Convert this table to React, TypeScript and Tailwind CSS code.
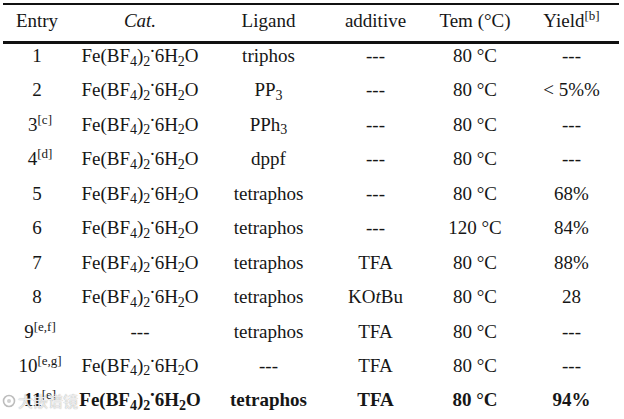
import React from 'react';

type Row = {
  entry: string;
  note?: string;
  cat: boolean;
  ligand: React.ReactNode;
  additive: React.ReactNode;
  tem: string;
  yld: string;
  bold?: boolean;
};

const Cat = () => (
  <span>
    Fe(BF<sub className="text-[14px]">4</sub>)<sub className="text-[14px]">2</sub>
    <span className="relative -top-[5px] -mx-[1px]">·</span>6H<sub className="text-[14px]">2</sub>O
  </span>
);

const rows: Row[] = [
  { entry: '1', cat: true, ligand: 'triphos', additive: '---', tem: '80 °C', yld: '---' },
  { entry: '2', cat: true, ligand: <span>PP<sub className="text-[14px]">3</sub></span>, additive: '---', tem: '80 °C', yld: '< 5%%' },
  { entry: '3', note: '[c]', cat: true, ligand: <span>PPh<sub className="text-[14px]">3</sub></span>, additive: '---', tem: '80 °C', yld: '---' },
  { entry: '4', note: '[d]', cat: true, ligand: 'dppf', additive: '---', tem: '80 °C', yld: '---' },
  { entry: '5', cat: true, ligand: 'tetraphos', additive: '---', tem: '80 °C', yld: '68%' },
  { entry: '6', cat: true, ligand: 'tetraphos', additive: '---', tem: '120 °C', yld: '84%' },
  { entry: '7', cat: true, ligand: 'tetraphos', additive: 'TFA', tem: '80 °C', yld: '88%' },
  { entry: '8', cat: true, ligand: 'tetraphos', additive: <span>KO<i>t</i>Bu</span>, tem: '80 °C', yld: '28' },
  { entry: '9', note: '[e,f]', cat: false, ligand: 'tetraphos', additive: 'TFA', tem: '80 °C', yld: '---' },
  { entry: '10', note: '[e,g]', cat: true, ligand: '---', additive: 'TFA', tem: '80 °C', yld: '---' },
  { entry: '11', note: '[e]', cat: true, ligand: 'tetraphos', additive: 'TFA', tem: '80 °C', yld: '94%', bold: true },
];

const cols = 'grid grid-cols-[68px_138px_119px_95px_104px_89px] text-center';

export default function App() {
  return (
    <div
      className="relative w-[624px] h-[419px] bg-white text-[#161616] overflow-hidden"
      style={{ fontFamily: '"Liberation Serif", "Times New Roman", serif' }}
    >
      <div className="ml-[3px] w-[616px] pt-[3px] text-[19px] leading-[24px]">
        {/* header */}
        <div className={`${cols} border-t-[2.5px] border-b-[3px] border-[#111] h-[41px] pt-[4px]`}>
          <div>Entry</div>
          <div><i>Cat.</i></div>
          <div>Ligand</div>
          <div>additive</div>
          <div>Tem (°C)</div>
          <div>
            Yield<sup className="text-[13px] -top-[7px]">[b]</sup>
          </div>
        </div>

        {/* body */}
        {rows.map((r) => (
          <div key={r.entry} className={`${cols} h-[34.45px] ${r.bold ? 'font-bold' : ''}`}>
            <div className={r.note ? 'pl-[6px]' : ''}>
              {r.entry}
              {r.note && <sup className="text-[13px] -top-[7px] font-normal">{r.note}</sup>}
            </div>
            <div>{r.cat ? <Cat /> : '---'}</div>
            <div>{r.ligand}</div>
            <div>{r.additive}</div>
            <div>{r.tem}</div>
            <div>{r.yld}</div>
          </div>
        ))}
      </div>

      {/* watermark */}
      <div className="absolute left-[2px] top-[393px] flex items-center gap-[2px] text-white/80 [text-shadow:0_0_1px_#8a8a8a]">
        <svg width="14" height="14" viewBox="0 0 14 14">
          <circle cx="7" cy="7" r="5.5" fill="none" stroke="#bdbdbd" strokeWidth="1.6" />
          <circle cx="7" cy="7" r="2" fill="#d0d0d0" />
        </svg>
        <span
          className="text-[15px] leading-none"
          style={{ fontFamily: '"Noto Sans CJK SC", sans-serif' }}
        >
          大嵌谱镜
        </span>
      </div>
    </div>
  );
}
